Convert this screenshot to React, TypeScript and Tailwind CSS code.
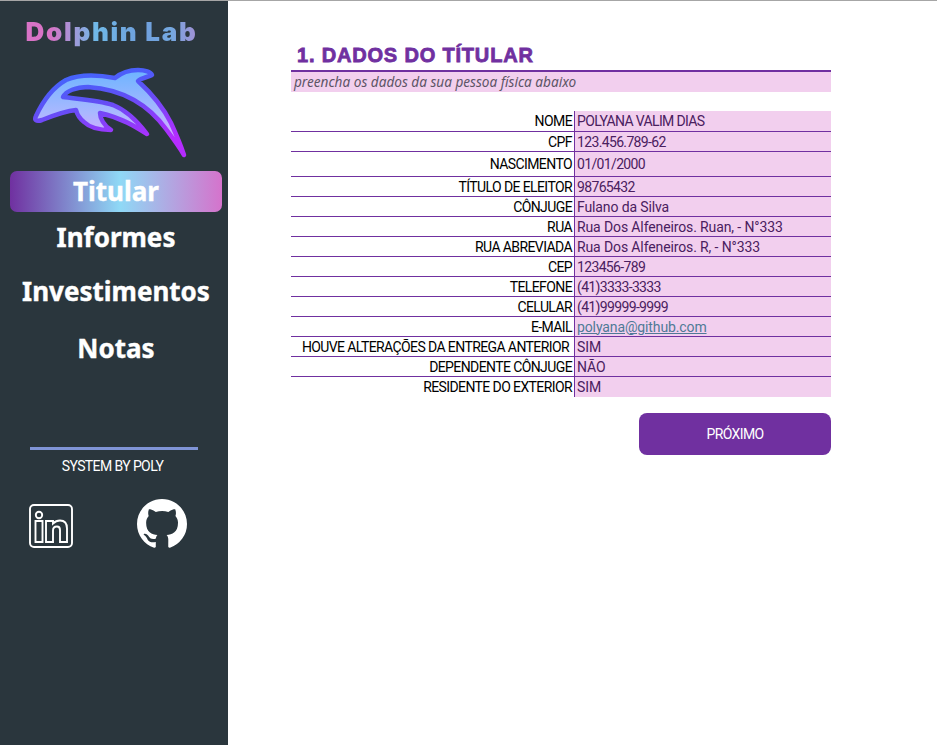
import { BsGithub } from "react-icons/bs";

const rows = [
    { label: "NOME", value: "POLYANA VALIM DIAS", h: "h-[21px]", tight: true },
    { label: "CPF", value: "123.456.789-62", h: "h-5", tight: true },
    { label: "NASCIMENTO", value: "01/01/2000", h: "h-[25px]", tight: true },
    { label: "TÍTULO DE ELEITOR", value: "98765432", h: "h-5", tight: true },
    { label: "CÔNJUGE", value: "Fulano da Silva", h: "h-5" },
    { label: "RUA", value: "Rua Dos Alfeneiros. Ruan, - N°333", h: "h-5" },
    { label: "RUA ABREVIADA", value: "Rua Dos Alfeneiros. R, - N°333", h: "h-5" },
    { label: "CEP", value: "123456-789", h: "h-5", tight: true },
    { label: "TELEFONE", value: "(41)3333-3333", h: "h-5", tight: true },
    { label: "CELULAR", value: "(41)99999-9999", h: "h-5", tight: true },
    { label: "E-MAIL", value: "polyana@github.com", h: "h-5", link: true },
    { label: "HOUVE ALTERAÇÕES DA ENTREGA ANTERIOR", value: "SIM", h: "h-5", indent: true },
    { label: "DEPENDENTE CÔNJUGE", value: "NÃO", h: "h-5" },
    { label: "RESIDENTE DO EXTERIOR", value: "SIM", h: "h-5", last: true },
];

const Dolphin = () => (
    <svg width="160" height="95" viewBox="30 65 160 95" fill="none">
        <defs>
            <linearGradient id="dolphinFill" x1="0" y1="0" x2="0" y2="1">
                <stop offset="0" stopColor="#6cb4ff" />
                <stop offset="0.5" stopColor="#a9b8ff" />
                <stop offset="0.8" stopColor="#d6aaff" />
            </linearGradient>
            <linearGradient id="dolphinStroke" x1="0" y1="0" x2="0.35" y2="1">
                <stop offset="0" stopColor="#3a6cff" />
                <stop offset="0.45" stopColor="#5f50f5" />
                <stop offset="1" stopColor="#b52cff" />
            </linearGradient>
        </defs>
        <path
            d="M36 116 C42 103 52 88 66 80 C80 74 99 75 115 78 C121 73 130 70 138 70 C145 70 151 72 152 75 C148 77 141 78 138 81 C150 92 163 107 171 123 C176 134 181 146 184 155 C178 145 172 137 166 129 C158 118 148 108 134 100 C120 92 103 88 88 87 C76 87 66 91 63 97 C78 99 98 100 113 105 C126 110 138 122 147 134 C136 127 122 118 100 113 C100 118 104 126 111 130 C101 130 90 128 84 122 C79 118 77 114 76 110 C65 111 52 116 42 120 C36 122 34 120 36 116 Z"
            fill="url(#dolphinFill)"
            stroke="url(#dolphinStroke)"
            strokeWidth="4.5"
            strokeLinejoin="round"
        />
    </svg>
);

const LinkedinOutline = () => (
    <svg width="44" height="44" viewBox="0 0 44 44" fill="none" stroke="#ffffff" strokeWidth="1.9">
        <rect x="1" y="1" width="42" height="42" rx="4" />
        <circle cx="10" cy="11" r="3.2" />
        <path d="M6.5 17 H13.5 V38 H6.5 Z" />
        <path d="M17 17 H24 V19.5 C26 17.5 28.5 16.5 31 16.5 C35.5 16.5 38 19.5 38 24.5 V38 H31 V26 C31 23.5 29.8 22.5 28 22.5 C25.8 22.5 24 24 24 26.5 V38 H17 Z" />
    </svg>
);

const App = () => {
    return (
        <div className="flex h-[745px] w-[937px] overflow-hidden border-t border-[#a6a6a6] bg-white font-['Roboto',sans-serif]">
            {/* This is the sidebar */}
            <aside className="flex w-[228px] shrink-0 flex-col bg-[#2a363d]">
                <h1 className="mt-[15px] bg-[linear-gradient(90deg,#d873c6_0%,#d873c6_22%,#70b9e8_42%,#6f9fdc_62%,#74a8e0_75%,#d873c6_100%)] bg-clip-text pr-[5px] text-center font-['Inter',sans-serif] text-[26px] leading-8 font-black tracking-[1.7px] text-transparent">
                    Dolphin Lab
                </h1>
                <div className="mt-[17px] flex pl-[30px]">
                    <Dolphin />
                </div>
                {/* This is the nav links */}
                <nav className="mt-[11px] flex flex-col items-center pr-[6px] pl-[10px] font-['Noto_Sans',sans-serif] text-[26px] leading-[41px] font-bold text-white [-webkit-text-stroke:0.4px_#ffffff]">
                    <a className="w-full rounded-[7px] bg-[linear-gradient(90deg,#7030a0_0%,#8fd9f6_52%,#d573cc_100%)] text-center">Titular</a>
                    <a className="mt-[5px] text-center">Informes</a>
                    <a className="mt-[13px] text-center">Investimentos</a>
                    <a className="mt-[16px] text-center">Notas</a>
                </nav>
                <div className="mt-[78px] ml-[30px] h-[3px] w-[168px] bg-[#7f94d6]" />
                <p className="mt-[6px] pr-[3px] text-center text-[14px] leading-5 tracking-[-0.6px] text-white">SYSTEM BY POLY</p>
                <div className="mt-[23px] flex items-center gap-[64px] pl-[29px]">
                    <div className="mt-[3px]">
                        <LinkedinOutline />
                    </div>
                    <BsGithub className="h-[50px] w-[50px] text-white" />
                </div>
            </aside>

            {/* This is the form side */}
            <main className="ml-[63px] flex w-[540px] flex-col pt-[42px]">
                <h2 className="pb-[2px] pl-[6px] font-['Liberation_Sans',sans-serif] text-[20px] leading-[25px] font-bold tracking-[0.82px] text-[#7030a0] [-webkit-text-stroke:0.8px_#7030a0]">
                    1. DADOS DO TÍTULAR
                </h2>
                <p className="h-[22px] border-t-2 border-[#7030a0] bg-[#f2cfee] pl-[3px] font-['Noto_Sans',sans-serif] text-[13.6px] leading-5 text-[#5d5566] italic">
                    preencha os dados da sua pessoa física abaixo
                </p>

                {/* This is the data table */}
                <div className="mt-[19px] flex flex-col text-[14px]">
                    {rows.map((row) => (
                        <div key={row.label} className={`flex ${row.h} ${row.last ? "" : "border-b border-[#7030a0]"}`}>
                            <span className={`flex w-[283px] shrink-0 items-center justify-end pt-[1px] tracking-[-0.6px] whitespace-nowrap text-black ${row.indent ? "pr-[5px]" : "pr-[2px]"}`}>
                                {row.label}
                            </span>
                            <span className={`flex flex-1 items-center border-l border-[#7030a0] bg-[#f2cfee] pt-[1px] pl-[2px] ${row.tight ? "tracking-[-0.65px]" : "tracking-[-0.12px]"} ${row.link ? "text-[#4f7a96] underline" : "text-[#4a2060]"}`}>
                                {row.value}
                            </span>
                        </div>
                    ))}
                </div>

                <div className="mt-4 flex justify-end">
                    <button className="h-[42px] w-[192px] rounded-[8px] bg-[#7030a0] text-[14px] tracking-[-0.6px] text-white">PRÓXIMO</button>
                </div>
            </main>
        </div>
    );
};

export default App;
